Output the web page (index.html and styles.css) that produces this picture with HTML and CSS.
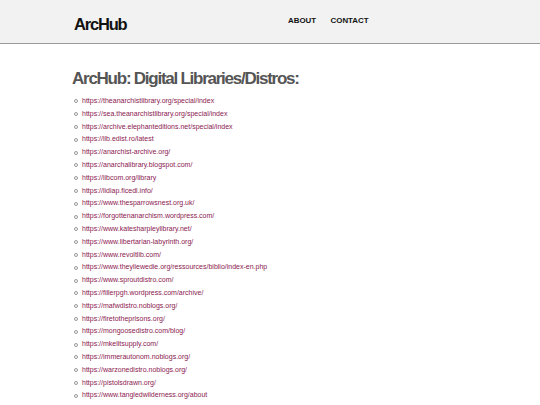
FILE: index.html
```html
<!DOCTYPE html>
<html>
<head>
<meta charset="utf-8">
<link rel="stylesheet" href="styles.css">
</head>
<body>
<header class="site-header">
  <div class="header-inner">
    <div class="logo">ArcHub</div>
    <nav class="nav">
      <a href="#">ABOUT</a>
      <a href="#">CONTACT</a>
    </nav>
  </div>
</header>
<main class="content">
  <h1 class="title">ArcHub: Digital Libraries/Distros:</h1>
  <ul class="links">
    <li><a href="#">https://theanarchistlibrary.org/special/index</a></li>
    <li><a href="#">https://sea.theanarchistlibrary.org/special/index</a></li>
    <li><a href="#">https://archive.elephanteditions.net/special/index</a></li>
    <li><a href="#">https://lib.edist.ro/latest</a></li>
    <li><a href="#">https://anarchist-archive.org/</a></li>
    <li><a href="#">https://anarchalibrary.blogspot.com/</a></li>
    <li><a href="#">https://libcom.org/library</a></li>
    <li><a href="#">https://lidiap.ficedl.info/</a></li>
    <li><a href="#">https://www.thesparrowsnest.org.uk/</a></li>
    <li><a href="#">https://forgottenanarchism.wordpress.com/</a></li>
    <li><a href="#">https://www.katesharpleylibrary.net/</a></li>
    <li><a href="#">https://www.libertarian-labyrinth.org/</a></li>
    <li><a href="#">https://www.revoltlib.com/</a></li>
    <li><a href="#">https://www.theyliewedie.org/ressources/biblio/index-en.php</a></li>
    <li><a href="#">https://www.sproutdistro.com/</a></li>
    <li><a href="#">https://fillerpgh.wordpress.com/archive/</a></li>
    <li><a href="#">https://mafwdistro.noblogs.org/</a></li>
    <li><a href="#">https://firetotheprisons.org/</a></li>
    <li><a href="#">https://mongoosedistro.com/blog/</a></li>
    <li><a href="#">https://mkelitsupply.com/</a></li>
    <li><a href="#">https://immerautonom.noblogs.org/</a></li>
    <li><a href="#">https://warzonedistro.noblogs.org/</a></li>
    <li><a href="#">https://pistolsdrawn.org/</a></li>
    <li><a href="#">https://www.tangledwilderness.org/about</a></li>
  </ul>
</main>
</body>
</html>
```
FILE: styles.css
```css
html, body {
  margin: 0;
  padding: 0;
  background: #ffffff;
  font-family: "Liberation Sans", Arial, sans-serif;
}
.site-header {
  background: #f2f2f2;
  border-bottom: 1px solid #9a9a9a;
  height: 43px;
}
.header-inner {
  display: flex;
  align-items: flex-start;
  padding-left: 74px;
}
.logo {
  font-size: 16.5px;
  font-weight: bold;
  letter-spacing: -1.2px;
  color: #111;
  margin-top: 15px;
  width: 214px;
}
.nav {
  display: flex;
  gap: 14.5px;
  margin-top: 16px;
}
.nav a {
  font-size: 7.9px;
  font-weight: bold;
  letter-spacing: 0;
  color: #111;
  text-decoration: none;
}
.content {
  padding-left: 72px;
}
.title {
  margin: 25px 0 6px 0;
  font-size: 17px;
  font-weight: bold;
  color: #555555;
  letter-spacing: -1.25px;
}
.links {
  list-style: none;
  margin: 0;
  padding-left: 0;
}
.links li {
  display: flex;
  align-items: center;
  font-size: 7px;
  line-height: 12.8px;
}
.links li::before {
  content: "";
  width: 2px;
  height: 2px;
  border: 1px solid #999;
  border-radius: 50%;
  margin: 0 4px 0 2px;
}
.links a {
  color: #8b2050;
  text-decoration: none;
}
```
